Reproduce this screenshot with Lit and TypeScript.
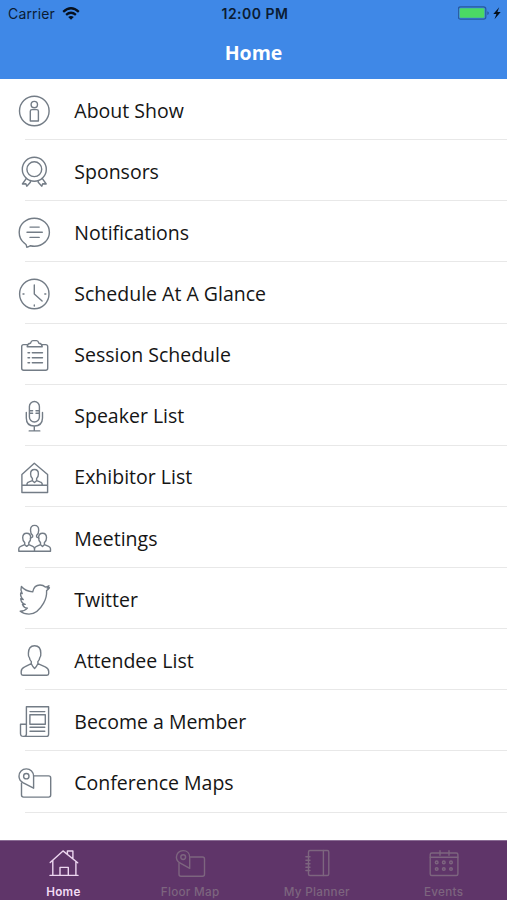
import { LitElement, html, css, svg } from "lit";
import { customElement } from "lit/decorators.js";
import { classMap } from "lit/directives/class-map.js";

const icons: Record<string, unknown> = {
  about: svg`<circle cx="18.3" cy="18" r="14.8"/><circle cx="18.3" cy="11.6" r="3.2"/><path d="M16 16.600h4.700q1.700 0 1.700 1.700V28h-8.100v-9.700q0-1.700 1.700-1.700z"/>`,
  sponsors: svg`<circle cx="18.3" cy="15.2" r="12"/><circle cx="18.3" cy="15.2" r="7.400"/><path d="M10.400 24.400 6.400 30l3.500-.2.900 2.400 3.600-3.900v-1.900M26.200 24.400l4 5.600-3.500-.2-.9 2.400-3.600-3.900v-1.900"/>`,
  notifications: svg`<path d="M10.800 32.200q-.2-3-2.400-4.100C5 25.500 3.200 21.500 3.200 17.200 3.200 9.400 9.900 3.200 18.300 3.200s15.100 6.200 15.100 14-6.700 14-15.100 14c-1.500 0-2.800-.2-4.100-.5-1 .9-2 1.300-3.400 1.500z"/><path d="M14 12.100h9.200M11 17.300h15.300M14 22.400h9.200"/>`,
  clock: svg`<circle cx="18.300" cy="18" r="14.700"/><path d="M18.300 9v9l7.800 7M7 18h1M28.800 18h1M18.300 29v1"/>`,
  session: svg`<path d="M11.300 6.600H7.700q-2 0-2 2v21.600q0 2 2 2h22q2 0 2-2V8.600q0-2-2-2h-3.600"/><path d="M11.200 8.700q.2-3.200 3.300-3.400.8-2.700 2.300-2.700h3.800q1.500 0 2.300 2.700 3.100.2 3.300 3.400z"/><path d="M16.300 14.700h10.200M16.300 19.700h10.200M16.300 24.700h10.200M12 14.700h1.600M12 19.700h1.600M12 24.700h1.600"/>`,
  mic: svg`<rect x="13.400" y="2.500" width="10" height="20.500" rx="5"/><path d="M10.300 13.400V19q0 8 8 8t8.200-8v-5.600M18.300 27v4.800M13.200 31.900h10.600M13.600 11.700h3M20 11.700h3M13.600 14.200h3M20 14.200h3"/>`,
  exhibitor: svg`<path d="M5.900 32.500v-18L18.300 3.200l13.300 11.300v18zM5.900 25.200h25.700"/><path d="M11 25.200q-.4-2.700 2.100-3.300l3.300-1.200v-2.200c-1.300-1-1.800-2.500-1.800-4.600 0-3 1.400-4.400 3.900-4.400s3.900 1.400 3.900 4.400c0 2.100-.5 3.600-1.800 4.600v2.200l3.300 1.200q2.700.6 2.300 3.300M16.400 20.700l2.100 1.800 2.100-1.800"/>`,
  meetings: svg`<path d="M16.600 16v-1.700c-1.500-1-2.100-2.900-2.100-5.100 0-3.200 1.400-4.800 4.100-4.800s4.100 1.600 4.100 4.800c0 2.200-.6 4.100-2.100 5.100V16l2.300 1.200M16.600 16l-2.300 1.200"/><path d="M18.500 30.200H2.800v-2.400q.1-1.700 1.900-2.400l4-1.700v-2.100c-1.300-1-2-2.800-2-4.900 0-3.100 1.400-4.500 4-4.500s4 1.400 4 4.500c0 2.100-.7 3.900-1.900 4.900v2.100l4 1.700q1.700.7 1.700 2.400zM8.700 23.700l2 1.700 2.100-1.700"/><path d="M18.500 30.200h16v-2.400q-.1-1.700-1.900-2.400l-4.200-1.700v-2.100c1.500-1 2.100-2.800 2.100-4.900 0-3.100-1.400-4.500-3.900-4.500s-4 1.400-4 4.500c0 2.100.7 3.900 1.900 4.900v2.100l-4 1.700q-2 .7-2 2.400M24.500 23.700l2 1.700 1.900-1.700"/>`,
  twitter: svg`<path d="M5.400 4.500c2.800 3.300 6.600 5 11.300 5.400C17.600 5.300 20.300 3 24 3c2.200 0 4 .8 5.300 2.100 1.300-.2 2.500-.6 3.600-1.400q-.5 1.500-1.700 2.400 1.100 0 2.200-.3-1 1.500-2.800 2.800c.2 3.600-.5 8.200-3 12.500-3 5.400-7.800 11-14.600 11-3.500 0-6.500-1-8.800-2.800 2.700 0 5.200-1 7.200-3.200-2.300-.2-4-1.400-4.900-3.700h2.700C6.500 21.500 4.900 19.500 4.700 16.800l2.500.7C5 15.500 4.300 13.600 4.700 10.900l1.500.7C4.800 9.200 4.500 7 5.400 4.500z"/>`,
  attendee: svg`<path d="M15.300 20.700v-2.200c-1.200-.9-1.600-2-1.800-3.600-1-1.400-1.300-3-1.100-4.600 0-5 2-7.600 6.200-7.600s6.200 2.600 6.200 7.600c.2 1.600-.1 3.200-1.100 4.600-.2 1.600-.6 2.700-1.800 3.600v2.200l7.300 3.100q3.500 1.500 3.500 4.600v2.200q0 1.700-1.700 1.700H6.900q-1.700 0-1.700-1.700v-2.200q0-3.100 3.500-4.600zq1.300 2.700 3.300 4.800 2-2.100 3.300-4.800"/>`,
  member: svg`<path d="M10.400 30V2.700h22.200v27.500q0 2.200-2.200 2.200h-23q-2.900 0-2.900-2.900v-9.200h5.900V30q0 2.300-2.300 2.400M14 7.600h14.800M14 23.300h14.800M14 27.300h14.800"/><rect x="13.900" y="10.700" width="15.400" height="9.500"/>`,
  maps: svg`<path d="M5.500 18v12q0 2.100 2.100 2.100h25q2.100 0 2.100-2.100V13q0-2.100-2.100-2.100H18"/><path d="M17.600 23.200 7.300 17.900C4.700 16.400 3 14.300 3 11.200 3 6.900 6.100 3.900 10.300 3.900s7.300 3 7.300 7.300z"/><circle cx="10.300" cy="11.200" r="2.700"/>`,
  home: svg`<path d="M5.200 17.600 18 5.900l14.700 11.800M7.800 15.500v14.800M30.900 16.500v13.800M5 30.400h28M15 30V22.400h8.300V30M22.400 9V6h5.500v7.500"/>`,
  floor: svg`<path d="M7 18.500v10.700q0 2 2 2h21.500q2 0 2-2V14q0-2-2-2h-12"/><path d="M17.700 23.400 8.300 18.100C5.900 16.700 4.400 15 4.400 12.200c0-3.900 2.800-6.600 6.700-6.600s6.600 2.700 6.600 6.600z"/><circle cx="11.200" cy="12.100" r="2.400"/>`,
  planner: svg`<rect x="9.500" y="5.500" width="20.300" height="25" rx="1.500"/><path d="M24.400 5.500v25M6.900 11.700H11M6.900 15.200H11M6.900 18.700H11M6.900 22.200H11M6.900 25.500H11"/>`,
  events: svg`<rect x="4.200" y="8" width="27.700" height="22.500" rx="1.500"/><path d="M4.200 12.300h27.700M14 5.800v4.500M23 5.800v4.500"/><g stroke-width="1.500"><circle cx="10.700" cy="17.400" r="1.300"/><circle cx="17.800" cy="17.400" r="1.300"/><circle cx="25" cy="17.400" r="1.300"/><circle cx="10.700" cy="24" r="1.300"/><circle cx="17.800" cy="24" r="1.300"/><circle cx="25" cy="24" r="1.300"/></g>`,
};

const rows: [string, string][] = [
  ["about", "About Show"],
  ["sponsors", "Sponsors"],
  ["notifications", "Notifications"],
  ["clock", "Schedule At A Glance"],
  ["session", "Session Schedule"],
  ["mic", "Speaker List"],
  ["exhibitor", "Exhibitor List"],
  ["meetings", "Meetings"],
  ["twitter", "Twitter"],
  ["attendee", "Attendee List"],
  ["member", "Become a Member"],
  ["maps", "Conference Maps"],
];

const tabs: [string, string][] = [
  ["home", "Home"],
  ["floor", "Floor Map"],
  ["planner", "My Planner"],
  ["events", "Events"],
];

const icon = (name: string) => html`<svg class="icon" viewBox="0 0 36 36">${icons[name]}</svg>`;

@customElement("app-root")
export class AppRoot extends LitElement {
  static styles = css`
    :host {
      display: flex;
      flex-direction: column;
      height: 900px;
      background: #fff;
      overflow: hidden;
      font-family: "Open Sans", "Noto Sans", sans-serif;
    }
    header {
      flex: none;
      height: 79px;
      box-sizing: border-box;
      background: #3f88e7;
    }
    .status {
      display: grid;
      grid-template-columns: 1fr auto 1fr;
      align-items: center;
      height: 27px;
      padding: 0 5px 0 8px;
      font: 400 14px/27px Inter, sans-serif;
      color: #0b1c33;
    }
    .carrier {
      display: flex;
      align-items: center;
      gap: 7px;
      letter-spacing: 0.15px;
    }
    .wifi {
      width: 18px;
      height: 13px;
    }
    .time {
      font-weight: 600;
      letter-spacing: 0.5px;
    }
    .power {
      display: flex;
      justify-content: flex-end;
    }
    .battery {
      width: 44px;
      height: 15px;
    }
    h1 {
      margin: 0;
      padding-top: 12px;
      font-size: 19.5px;
      line-height: 27px;
      font-weight: 700;
      text-align: center;
      color: #fff;
    }
    ul {
      flex: 1;
      margin: 0;
      padding: 0;
      list-style: none;
    }
    li {
      height: 61.14px;
      display: grid;
      grid-template-columns: 36px 1fr;
      grid-template-rows: 60.14px 1px;
      column-gap: 22.3px;
      padding-left: 16px;
    }
    li .icon {
      margin-top: 14px;
      stroke: #737c86;
    }
    .label {
      padding-top: 3.7px;
      font-size: 19.5px;
      line-height: 56px;
      color: #151515;
      white-space: nowrap;
    }
    .rule {
      grid-column: 1 / -1;
      margin-left: 9px;
      background: #e8e8e8;
    }
    .icon {
      width: 36px;
      height: 36px;
      fill: none;
      stroke-width: 1.4;
      stroke-linejoin: round;
      stroke-linecap: round;
    }
    nav {
      flex: none;
      height: 60px;
      box-sizing: border-box;
      border-top: 1px solid #8a6c94;
      background: #5f3569;
      display: grid;
      grid-template-columns: repeat(4, 1fr);
    }
    .tab {
      display: flex;
      flex-direction: column;
      align-items: center;
      padding-top: 4px;
      font: 500 11.7px/14px Inter, sans-serif;
      letter-spacing: 0.3px;
      color: #7d657f;
      stroke: #7d657f;
    }
    .tab .caption {
      margin-top: 3.5px;
      stroke: none;
    }
    .active {
      color: #f3dcf5;
      stroke: #ecd5ef;
      font-weight: 600;
    }
  `;

  render() {
    return html`
      <header>
        <div class="status">
          <div class="carrier">
            <span>Carrier</span>
            <svg class="wifi" viewBox="0 0 18 13">
              <g fill="none" stroke="#07101d" stroke-width="2.300">
                <path d="M1.200 4.800Q9-2.200 16.800 4.800" />
                <path d="M4.100 7.900Q9 3.700 13.900 7.900" />
              </g>
              <path fill="#07101d" d="M6.200 10Q9 7.800 11.800 10L9 12.800z" />
            </svg>
          </div>
          <div class="time">12:00 PM</div>
          <div class="power">
            <svg class="battery" viewBox="0 0 44 15">
              <rect x=".3" y=".9" width="27.500" height="12.300" rx="2.200" fill="none" stroke="#285a9c" stroke-width="1.200" />
              <rect x="1.700" y="2.300" width="24.700" height="9.500" rx="1" fill="#4bd964" />
              <path d="M29.300 5.200q1.600.3 1.600 1.900t-1.600 1.900z" fill="#285a9c" />
              <path d="M41.200 1.200 35.300 7.900h3.100L36.500 13.200l6.200-7.200h-3.300z" fill="#06101c" />
            </svg>
          </div>
        </div>
        <h1>Home</h1>
      </header>
      <ul>
        ${rows.map(
          ([name, label]) => html`<li>${icon(name)}<span class="label">${label}</span><span class="rule"></span></li>`
        )}
      </ul>
      <nav>
        ${tabs.map(
          ([name, label], i) => html`<div class=${classMap({ tab: true, active: i === 0 })}>
            ${icon(name)}<span class="caption">${label}</span>
          </div>`
        )}
      </nav>
    `;
  }
}
